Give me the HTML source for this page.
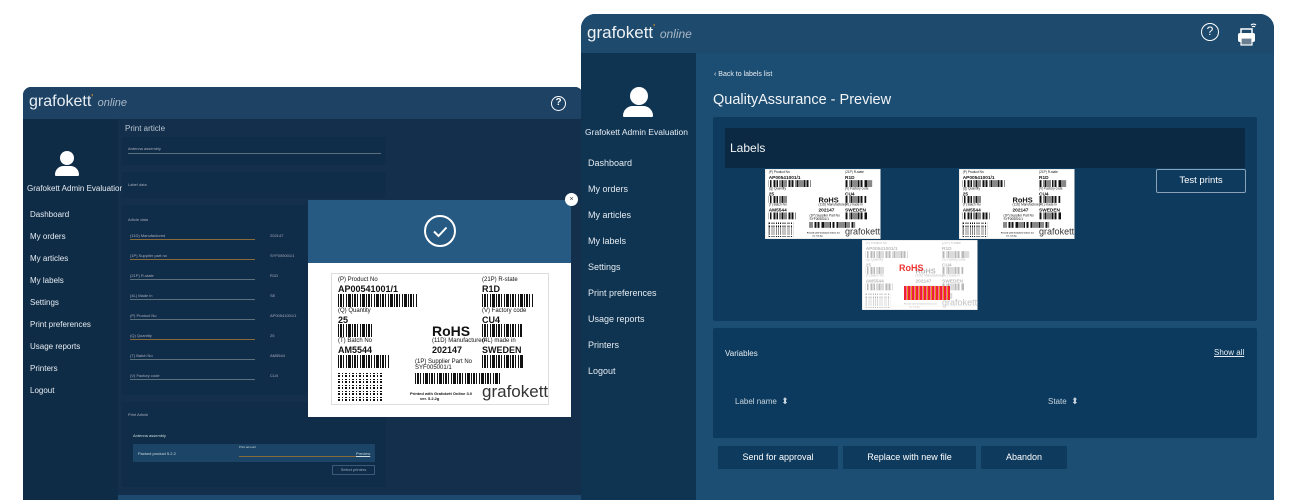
<!DOCTYPE html>
<html><head><meta charset="utf-8"><style>
*{margin:0;padding:0;box-sizing:border-box}
body{width:1300px;height:500px;background:#fff;position:relative;overflow:hidden;font-family:"Liberation Sans",sans-serif;color:#fff}
.a{position:absolute}
.bc{position:absolute;background:repeating-linear-gradient(90deg,#111 0 1px,#fff 1px 2px,#111 2px 4px,#fff 4px 5px,#111 5px 6px,#fff 6px 8px,#111 8px 9px,#fff 9px 10px,#111 10px 13px,#fff 13px 14px)}
.dm{position:absolute;background:repeating-linear-gradient(0deg,#111 0 2px,#fff 2px 3px,#111 3px 4px,#fff 4px 6px),repeating-linear-gradient(90deg,#111 0 2px,#fff 2px 4px,#111 4px 5px,#fff 5px 7px);background-blend-mode:lighten}
.lbl{position:absolute;width:218px;height:132px;background:#fff;border:1px solid #ddd;color:#111;transform-origin:0 0}
.lbl .t{position:absolute;font-size:6px;white-space:nowrap}
.lbl .v{position:absolute;font-size:9px;font-weight:bold;white-space:nowrap}
#L4>*{opacity:.3}
.nav div{position:absolute;white-space:nowrap}
.line{position:absolute;height:1px;background:#5d6f7a}
</style></head><body>

<!-- LEFT WINDOW -->
<div class="a" style="left:23px;top:87px;width:560px;height:413px;background:#163a58;border-radius:8px 8px 0 0;overflow:hidden">
  <div class="a" style="left:0;top:0;width:560px;height:32px;background:#1d4264"></div>
  <div class="a" style="left:6px;top:6px;font-size:16px;color:#e8eef3">grafokett<span style="color:#f39a1e;font-size:10px;vertical-align:top">'</span> <i style="font-size:11px;color:#aab8c6">online</i></div>
  <div class="a" style="left:528px;top:9px;width:15px;height:15px;border:1.5px solid #fff;border-radius:50%;font-size:10px;text-align:center;line-height:12px;font-weight:bold">?</div>
  <div class="a" style="left:0;top:32px;width:95px;height:381px;background:#0f2c47"></div>
  <div class="a" style="left:95px;top:32px;width:465px;height:381px;background:#132f4b"></div>
  <div class="a" style="left:37px;top:64px;width:14px;height:14px;border-radius:50%;background:#fff"></div>
  <div class="a" style="left:32px;top:79px;width:24px;height:10px;border-radius:12px 12px 2px 2px;background:#fff"></div>
  <div class="a" style="left:4px;top:97px;font-size:8px;color:#e6ecf1">Grafokett Admin Evaluation</div>
  <div class="nav" style="font-size:8px;color:#e6ecf1">
    <div style="left:7px;top:123px">Dashboard</div><div style="left:7px;top:145px">My orders</div><div style="left:7px;top:167px">My articles</div><div style="left:7px;top:189px">My labels</div><div style="left:7px;top:211px">Settings</div><div style="left:7px;top:233px">Print preferences</div><div style="left:7px;top:255px">Usage reports</div><div style="left:7px;top:277px">Printers</div><div style="left:7px;top:299px">Logout</div>
  </div>
  <div class="a" style="left:102px;top:37px;font-size:8px;color:#b9c6d2">Print article</div>
  <div class="a" style="left:99px;top:50px;width:264px;height:28px;background:#0f2d49"></div>
  <div class="a" style="left:105px;top:59px;font-size:4px;color:#aab">Antenna assembly</div>
  <div class="line" style="left:105px;top:66px;width:253px"></div>
  <div class="a" style="left:99px;top:85px;width:264px;height:26px;background:#0f2d49"></div>
  <div class="a" style="left:105px;top:95px;font-size:4px;color:#aab">Label data</div>
  <div class="a" style="left:99px;top:118px;width:264px;height:190px;background:#0f2d49"></div>
  <div class="a" style="left:105px;top:130px;font-size:4px;color:#aab">Article data</div>
  <div style="font-size:4px;color:#aab">
   <div class="a" style="left:107px;top:146px">(11D) Manufactured</div><div class="a" style="left:247px;top:146px">202147</div><div class="line" style="left:107px;top:152px;width:125px;background:#8a6a3a"></div>
   <div class="a" style="left:107px;top:166px">(1P) Supplier part no</div><div class="a" style="left:247px;top:166px">SYF005001/1</div><div class="line" style="left:107px;top:172px;width:125px;background:#8a6a3a"></div>
   <div class="a" style="left:107px;top:186px">(21P) R-state</div><div class="a" style="left:247px;top:186px">R1D</div><div class="line" style="left:107px;top:192px;width:125px"></div>
   <div class="a" style="left:107px;top:206px">(4L) Made in</div><div class="a" style="left:247px;top:206px">SE</div><div class="line" style="left:107px;top:212px;width:125px"></div>
   <div class="a" style="left:107px;top:226px">(P) Product No</div><div class="a" style="left:247px;top:226px">AP00541001/1</div><div class="line" style="left:107px;top:232px;width:125px"></div>
   <div class="a" style="left:107px;top:246px">(Q) Quantity</div><div class="a" style="left:247px;top:246px">25</div><div class="line" style="left:107px;top:252px;width:125px;background:#8a6a3a"></div>
   <div class="a" style="left:107px;top:266px">(T) Batch No</div><div class="a" style="left:247px;top:266px">AM5544</div><div class="line" style="left:107px;top:272px;width:125px"></div>
   <div class="a" style="left:107px;top:286px">(V) Factory code</div><div class="a" style="left:247px;top:286px">CU4</div><div class="line" style="left:107px;top:292px;width:125px"></div>
  </div>
  <div class="a" style="left:99px;top:315px;width:264px;height:85px;background:#0f2d49"></div>
  <div class="a" style="left:105px;top:325px;font-size:4px;color:#aab">Print Article</div>
  <div class="a" style="left:110px;top:346px;font-size:4px;color:#cdd">Antenna assembly</div>
  <div class="a" style="left:110px;top:357px;width:242px;height:18px;background:#1c4466"></div>
  <div class="a" style="left:115px;top:364px;font-size:4px;color:#cdd">Packed product 5.2.2</div>
  <div class="a" style="left:216px;top:358px;font-size:3px;color:#cdd">Print amount</div>
  <div class="line" style="left:216px;top:369px;width:120px;background:#8a6a3a"></div>
  <div class="a" style="left:333px;top:364px;font-size:4px;color:#cdd;text-decoration:underline">Preview</div>
  <div class="a" style="left:309px;top:378px;width:43px;height:10px;border:1px solid #3a5a78;font-size:4px;color:#9ab;text-align:center;line-height:8px">Select printers</div>
  <div class="a" style="left:95px;top:408px;width:465px;height:5px;background:#1f4a70"></div>
</div>

<!-- RIGHT WINDOW -->
<div class="a" style="left:581px;top:14px;width:693px;height:486px;background:#1c4d72;border-radius:14px 14px 0 0;overflow:hidden">
  <div class="a" style="left:0;top:0;width:693px;height:39px;background:#1e4a6d"></div>
  <div class="a" style="left:6px;top:9px;font-size:17px;color:#eef2f5">grafokett<span style="color:#f39a1e;font-size:10px;vertical-align:top">'</span> <i style="font-size:12px;color:#aab8c6">online</i></div>
  <div class="a" style="left:620px;top:9px;width:18px;height:18px;border:1.5px solid #fff;border-radius:50%;font-size:12px;text-align:center;line-height:15px">?</div>
  <svg class="a" style="left:655px;top:7px" width="22" height="26" viewBox="0 0 22 26"><path d="M15 4a4 4 0 0 1 5 0M16 6a2 2 0 0 1 3 0" stroke="#fff" fill="none" stroke-width="1.2"/><rect x="5" y="8" width="11" height="5" fill="none" stroke="#fff" stroke-width="1.5"/><rect x="2" y="12" width="17" height="9" rx="2" fill="#fff"/><rect x="5" y="17" width="11" height="7" fill="#6b7f92" stroke="#fff" stroke-width="1.2"/></svg>
  <div class="a" style="left:0;top:39px;width:115px;height:447px;background:#0f3452"></div>
  <div class="a" style="left:49px;top:73px;width:18px;height:18px;border-radius:50%;background:#fff"></div>
  <div class="a" style="left:42px;top:92px;width:30px;height:11px;border-radius:15px 15px 2px 2px;background:#fff"></div>
  <div class="a" style="left:4px;top:113px;font-size:8.5px;color:#e6ecf1">Grafokett Admin Evaluation</div>
  <div class="nav" style="font-size:9px;color:#e6ecf1">
    <div style="left:7px;top:144px">Dashboard</div><div style="left:7px;top:170px">My orders</div><div style="left:7px;top:196px">My articles</div><div style="left:7px;top:222px">My labels</div><div style="left:7px;top:248px">Settings</div><div style="left:7px;top:274px">Print preferences</div><div style="left:7px;top:300px">Usage reports</div><div style="left:7px;top:326px">Printers</div><div style="left:7px;top:352px">Logout</div>
  </div>
  <div class="a" style="left:133px;top:57px;font-size:7px;color:#e6ecf1">‹ Back to labels list</div>
  <div class="a" style="left:132px;top:78px;font-size:14.5px;color:#f2f5f8">QualityAssurance - Preview</div>
  <div class="a" style="left:132px;top:103px;width:544px;height:204px;background:#0e3a5d;border-radius:2px"></div>
  <div class="a" style="left:144px;top:114px;width:520px;height:40px;background:#0b2942"></div>
  <div class="a" style="left:149px;top:127px;font-size:12px;color:#f2f5f8">Labels</div>
  <div class="a" style="left:575px;top:155px;width:90px;height:24px;border:1px solid #8aa2b8;border-radius:2px;font-size:9.5px;text-align:center;line-height:22px;background:#0e3a5d">Test prints</div>
  <div class="a" style="left:132px;top:314px;width:544px;height:110px;background:#0b3a5e;border-radius:2px"></div>
  <div class="a" style="left:144px;top:335px;font-size:8px;color:#e6ecf1">Variables</div>
  <div class="a" style="left:633px;top:334px;font-size:8px;color:#e6ecf1;text-decoration:underline">Show all</div>
  <div class="a" style="left:154px;top:382px;font-size:8px;color:#c9d4de">Label name &nbsp;<span style="font-size:9px">⬍</span></div>
  <div class="a" style="left:467px;top:382px;font-size:8px;color:#c9d4de">State &nbsp;<span style="font-size:9px">⬍</span></div>
  <div class="a" style="left:137px;top:432px;width:120px;height:23px;background:#0e3a5e;font-size:9px;text-align:center;line-height:23px">Send for approval</div>
  <div class="a" style="left:262px;top:432px;width:133px;height:23px;background:#0e3a5e;font-size:9px;text-align:center;line-height:23px">Replace with new file</div>
  <div class="a" style="left:400px;top:432px;width:86px;height:23px;background:#0e3a5e;font-size:9px;text-align:center;line-height:23px">Abandon</div>
</div>

<!-- modal white under label -->
<div class="a" style="left:308px;top:200px;width:263px;height:63px;background:#265a82"></div>
<div class="a" style="left:424px;top:215px;width:32px;height:32px;border:2px solid #fff;border-radius:50%"></div>
<svg class="a" style="left:424px;top:215px" width="32" height="32"><path d="M10 16.5l4.5 4.5 8-8.5" stroke="#fff" stroke-width="2" fill="none"/></svg>
<div class="a" style="left:308px;top:263px;width:263px;height:154px;background:#fff"></div>
<div class="a" style="left:565px;top:193px;width:13px;height:13px;border-radius:50%;background:#fff;color:#333;font-size:7px;text-align:center;line-height:13px">×</div>

<div id="L1" class="lbl" style="left:331px;top:273px">
 <div class="t" style="left:6px;top:3px">(P) Product No</div><div class="v" style="left:6px;top:10px">AP00541001/1</div><div class="bc" style="left:6px;top:20px;width:79px;height:13px"></div>
 <div class="t" style="left:150px;top:3px">(21P) R-state</div><div class="v" style="left:150px;top:10px">R1D</div><div class="bc" style="left:150px;top:20px;width:52px;height:13px"></div>
 <div class="t" style="left:6px;top:34px">(Q) Quantity</div><div class="v" style="left:6px;top:41px">25</div><div class="bc" style="left:6px;top:50px;width:34px;height:13px"></div>
 <div class="v" style="left:100px;top:49px;font-size:14px">RoHS</div>
 <div class="t" style="left:150px;top:34px">(V) Factory code</div><div class="v" style="left:150px;top:41px">CU4</div><div class="bc" style="left:150px;top:50px;width:40px;height:13px"></div>
 <div class="t" style="left:6px;top:64px">(T) Batch No</div><div class="v" style="left:6px;top:71px">AM5544</div><div class="bc" style="left:6px;top:81px;width:52px;height:13px"></div>
 <div class="t" style="left:100px;top:64px">(11D) Manufactured</div><div class="v" style="left:100px;top:71px">202147</div>
 <div class="t" style="left:150px;top:64px">(4L) made in</div><div class="v" style="left:150px;top:71px">SWEDEN</div><div class="bc" style="left:150px;top:81px;width:42px;height:13px"></div>
 <div class="t" style="left:83px;top:85px">(1P) Supplier Part No</div><div class="t" style="left:83px;top:91px">SYF005001/1</div><div class="bc" style="left:83px;top:99px;width:86px;height:11px"></div>
 <div class="dm" style="left:6px;top:98px;width:46px;height:29px"></div>
 <div class="t" style="left:78px;top:117px;font-size:4px;font-weight:bold">Printed with Grafokett Online 3.0<br>&nbsp;&nbsp;&nbsp;&nbsp;&nbsp;&nbsp;&nbsp;&nbsp;&nbsp;ver. 5.2.2g</div>
 <div class="t" style="left:150px;top:108px;font-size:17px;color:#333">grafokett</div>
</div>
<div id="L2" class="lbl" style="left:765px;top:169px;transform:scale(0.53)"></div>
<div id="L3" class="lbl" style="left:959px;top:169px;transform:scale(0.53)"></div>
<div id="L4" class="lbl" style="left:862px;top:240px;transform:scale(0.53)"></div>
<div class="a" style="left:899px;top:263px;font-size:9px;color:#e33;font-weight:bold">RoHS</div>
<div class="a" style="left:904px;top:286px;width:46px;height:14px;background:repeating-linear-gradient(90deg,#e23 0 2px,#f6a 2px 3px,#d91 3px 4px)"></div>
<script>
var s=document.getElementById('L1');
['L2','L3','L4'].forEach(function(i){document.getElementById(i).innerHTML=s.innerHTML});
</script>
</body></html>
